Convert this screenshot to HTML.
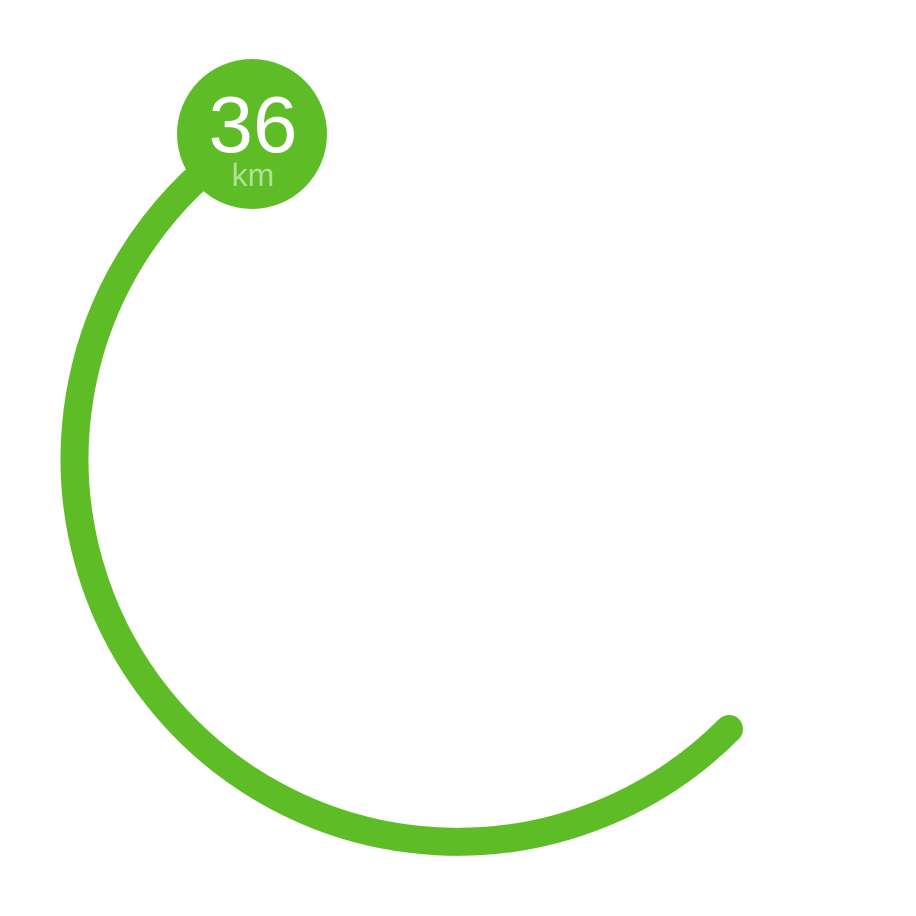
<!DOCTYPE html>
<html><head><style>
html,body{margin:0;padding:0;background:#fff;width:916px;height:916px;overflow:hidden}
</style></head><body>
<svg width="916" height="916" viewBox="0 0 916 916" xmlns="http://www.w3.org/2000/svg">
<path d="M 253 135 A 383 383 0 1 0 729 729" fill="none" stroke="#5ebd26" stroke-width="28" stroke-linecap="round"/>
<circle cx="252" cy="134" r="75" fill="#5ebd26"/>
<text x="253" y="152" text-anchor="middle" font-family="Liberation Sans, sans-serif" font-size="80" fill="#fff">36</text>
<text x="253" y="186" text-anchor="middle" font-family="Liberation Sans, sans-serif" font-size="32" fill="#b0e196">km</text>
</svg>
</body></html>
